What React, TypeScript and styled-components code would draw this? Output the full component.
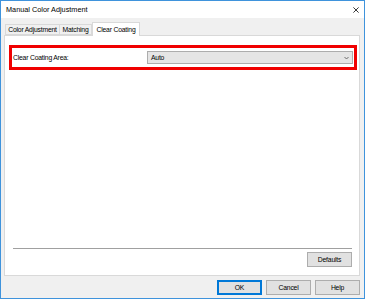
import React from "react";
import styled, { createGlobalStyle } from "styled-components";

const Global = createGlobalStyle`
  html, body { margin: 0; padding: 0; background: #ffffff; }
  * { box-sizing: border-box; }
  body { font-family: "Liberation Sans", Arial, sans-serif; color: #000; }
`;

const Window = styled.div`
  width: 365px;
  height: 299px;
  border: 1px solid #3f93dc;
  display: flex;
  flex-direction: column;
  background: #f0f0f0;
  overflow: hidden;
`;

const TitleBar = styled.div`
  height: 17px;
  background: #ffffff;
  display: flex;
  align-items: center;
  justify-content: space-between;
  padding: 0 5px 0 5px;
  font-size: 7.3px;
  letter-spacing: 0px;
  color: #000;
`;

const Close = styled.div`
  width: 6px;
  height: 6px;
  display: flex;
`;

const Body = styled.div`
  flex: 1;
  display: flex;
  flex-direction: column;
  padding: 4px 4px 0 3px;
`;

const TabRow = styled.div`
  display: flex;
  align-items: flex-end;
  height: 13px;
  padding-left: 1px;
  position: relative;
  z-index: 1;
`;

const Tab = styled.div<{ $active?: boolean; $w: number }>`
  width: ${(p) => p.$w}px;
  height: ${(p) => (p.$active ? "14px" : "11px")};
  margin-bottom: ${(p) => (p.$active ? "-1px" : "0")};
  display: flex;
  align-items: center;
  justify-content: center;
  font-size: 6.8px;
  letter-spacing: -0.2px;
  white-space: nowrap;
  background: ${(p) => (p.$active ? "#ffffff" : "#f0f0f0")};
  border: 1px solid #d9d9d9;
  border-bottom: ${(p) => (p.$active ? "none" : "1px solid #d9d9d9")};
  border-left: ${(p) => (p.$active ? "1px solid #d9d9d9" : "none")};
  position: relative;
  z-index: ${(p) => (p.$active ? 2 : 1)};
  &:first-child { border-left: 1px solid #d9d9d9; }
`;

const Panel = styled.div`
  height: 241px;
  background: #ffffff;
  border: 1px solid #d9d9d9;
  display: flex;
  flex-direction: column;
`;

const Highlight = styled.div`
  margin: 9px 2px 0 4px;
  height: 25px;
  border: 3px solid #f00000;
  display: flex;
  align-items: center;
  justify-content: space-between;
  padding: 0 1px 0 1px;
`;

const Label = styled.span`
  font-size: 6.8px;
  letter-spacing: -0.2px;
`;

const Select = styled.div`
  width: 206px;
  height: 13px;
  background: #e5e5e5;
  border: 1px solid #adadad;
  display: flex;
  align-items: center;
  justify-content: space-between;
  padding: 0 3px 0 3px;
  font-size: 6.8px;
  letter-spacing: -0.2px;
`;

const Spacer = styled.div`
  flex: 1;
`;

const Separator = styled.div`
  height: 1px;
  background: #a0a0a0;
  margin: 0 7px 0 8px;
`;

const DefaultsRow = styled.div`
  display: flex;
  justify-content: flex-end;
  padding: 3px 7px 8px 0;
`;

const Button = styled.button<{ $default?: boolean }>`
  width: 45px;
  height: 15px;
  padding: 0;
  margin: 0;
  font-family: "Liberation Sans", Arial, sans-serif;
  font-size: 6.8px;
  letter-spacing: -0.2px;
  color: #000;
  background: #e1e1e1;
  border: 1px solid ${(p) => (p.$default ? "#0078d7" : "#adadad")};
  box-shadow: ${(p) => (p.$default ? "inset 0 0 0 1px #0078d7" : "none")};
  display: flex;
  align-items: center;
  justify-content: center;
`;

const Footer = styled.div`
  display: flex;
  justify-content: flex-end;
  gap: 4px;
  padding: 4px 0 0 0;
`;

const Chevron = () => (
  <svg width="5" height="4" viewBox="0 0 5 4">
    <polyline points="0.5,1 2.5,3 4.5,1" fill="none" stroke="#606060" strokeWidth="0.9" />
  </svg>
);

const CloseIcon = () => (
  <svg width="6" height="6" viewBox="0 0 6 6">
    <line x1="0.4" y1="0.4" x2="5.6" y2="5.6" stroke="#222" strokeWidth="0.9" />
    <line x1="5.6" y1="0.4" x2="0.4" y2="5.6" stroke="#222" strokeWidth="0.9" />
  </svg>
);

export default function App() {
  return (
    <>
      <Global />
      <Window>
        <TitleBar>
          <span>Manual Color Adjustment</span>
          <Close>
            <CloseIcon />
          </Close>
        </TitleBar>
        <Body>
          <TabRow>
            <Tab $w={55}>Color Adjustment</Tab>
            <Tab $w={32}>Matching</Tab>
            <Tab $active $w={48}>Clear Coating</Tab>
          </TabRow>
          <Panel>
            <Highlight>
              <Label>Clear Coating Area:</Label>
              <Select>
                <span>Auto</span>
                <Chevron />
              </Select>
            </Highlight>
            <Spacer />
            <Separator />
            <DefaultsRow>
              <Button>Defaults</Button>
            </DefaultsRow>
          </Panel>
          <Footer>
            <Button $default>OK</Button>
            <Button>Cancel</Button>
            <Button>Help</Button>
          </Footer>
        </Body>
      </Window>
    </>
  );
}
